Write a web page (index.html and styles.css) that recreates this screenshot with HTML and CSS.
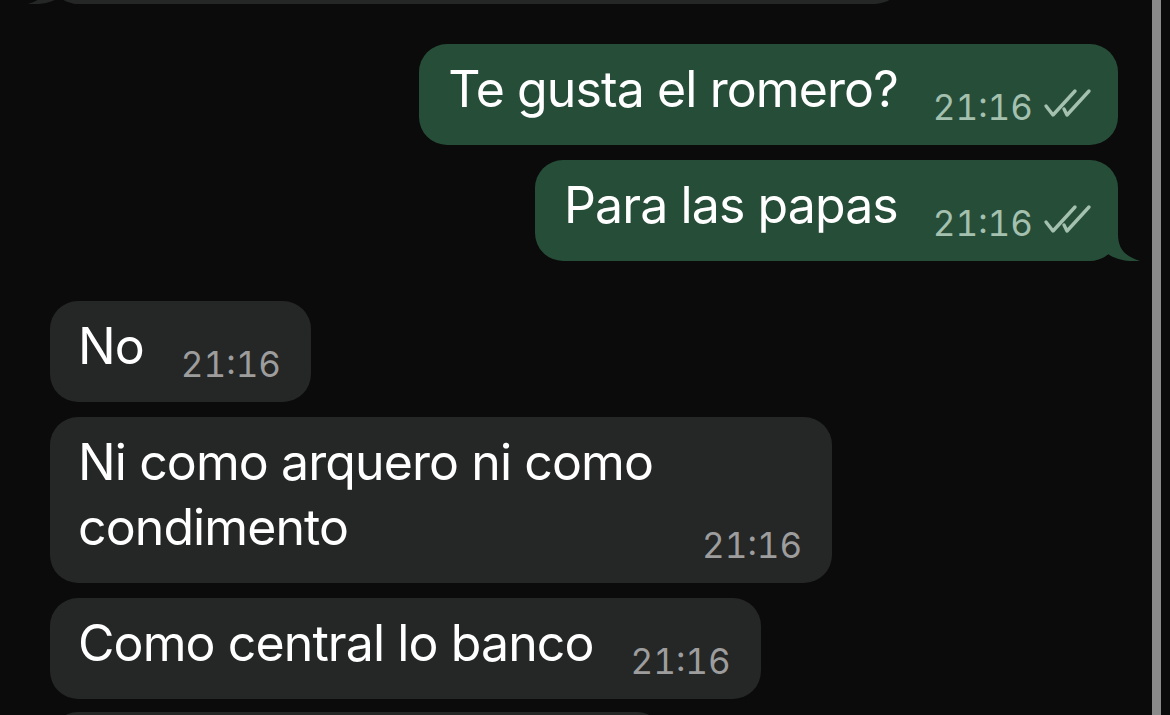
FILE: index.html
```html
<!DOCTYPE html>
<html lang="es">
<head>
<meta charset="utf-8">
<title>Chat</title>
<link rel="stylesheet" href="styles.css">
</head>
<body>
<div class="chat">
  <div class="bubble in partial-top">
    <svg class="tail tail-in" viewBox="0 0 50 41" width="50" height="41"><path d="M0,0 L28,0 L28,14 C28,28 34,36 50,41 C40,42 26,40 18,34 C12,38 6,41 0,41 Z"/></svg>
  </div>

  <div class="bubble out first-out">
    <span class="text">Te gusta el romero?</span>
    <span class="meta"><span class="time">21:16</span><svg class="check" viewBox="0 0 50 32" width="50" height="32"><path d="M4,18 L11,27 L33,3 M22,21 L25,27 L47,3"/></svg></span>
  </div>
  <div class="bubble out">
    <span class="text">Para las papas</span>
    <span class="meta"><span class="time">21:16</span><svg class="check" viewBox="0 0 50 32" width="50" height="32"><path d="M4,18 L11,27 L33,3 M22,21 L25,27 L47,3"/></svg></span>
    <svg class="tail tail-out" viewBox="0 0 50 41" width="50" height="41"><path d="M0,0 L28,0 L28,14 C28,28 34,36 50,41 C40,42 26,40 18,34 C12,38 6,41 0,41 Z"/></svg>
  </div>

  <div class="bubble in first-in">
    <span class="text">No</span>
    <span class="meta"><span class="time">21:16</span></span>
  </div>
  <div class="bubble in">
    <span class="text wrap">Ni como arquero ni como<br>condimento</span>
    <span class="meta"><span class="time">21:16</span></span>
  </div>
  <div class="bubble in">
    <span class="text">Como central lo banco</span>
    <span class="meta"><span class="time">21:16</span></span>
  </div>
  <div class="bubble in partial-bottom"></div>
</div>
<div class="scrollbar"></div>
</body>
</html>
```

FILE: styles.css
```css
html, body {
  margin: 0;
  padding: 0;
  height: 100%;
  background: #0b0b0b;
  overflow: hidden;
}

body {
  font-family: "Inter", "Roboto", "Liberation Sans", sans-serif;
  color: #ffffff;
}

.chat {
  display: flex;
  flex-direction: column;
  padding: 0 52px 0 50px;
}

.bubble {
  position: relative;
  display: flex;
  align-items: flex-end;
  gap: 37px;
  border-radius: 28px;
  padding: 13px 30px 23px 28px;
  box-sizing: border-box;
  min-height: 100px;
}

.bubble.in {
  align-self: flex-start;
  background: #252626;
  margin-top: 15px;
}

.bubble.out {
  align-self: flex-end;
  background: #264d38;
  margin-top: 15px;
  gap: 35px;
  padding-right: 26px;
  padding-left: 29px;
}

.bubble.out.first-out {
  margin-top: 40px;
}

.bubble.in.first-in {
  margin-top: 40px;
}

.bubble.in.partial-top {
  margin-top: -96px;
  width: 853px;
}

.bubble.in.partial-bottom {
  margin-top: 13px;
  width: 615px;
}

.text {
  font-size: 50px;
  line-height: 65px;
  letter-spacing: -0.9px;
  white-space: nowrap;
}

.text.wrap {
  width: 587px;
}

.meta {
  display: flex;
  align-items: center;
  gap: 9px;
  margin-bottom: -2px;
  line-height: 34px;
}

.time {
  font-size: 35px;
  letter-spacing: 0;
  font-variant-numeric: tabular-nums;
  color: #9d9d9d;
}

.out .time {
  color: #a4c0af;
}

.check {
  display: block;
  width: 50px;
  height: 32px;
  fill: none;
  stroke: #a4c0af;
  stroke-width: 3.4;
  stroke-linecap: round;
  stroke-linejoin: round;
  margin-top: -6px;
}

.tail {
  position: absolute;
  bottom: 0;
}

.tail-out {
  right: -22px;
  fill: #264d38;
}

.tail-in {
  left: -22px;
  fill: #252626;
  transform: scaleX(-1);
}

.scrollbar {
  position: fixed;
  top: 0;
  bottom: 0;
  right: 9px;
  width: 9px;
  background: #8a8a8a;
}
```
